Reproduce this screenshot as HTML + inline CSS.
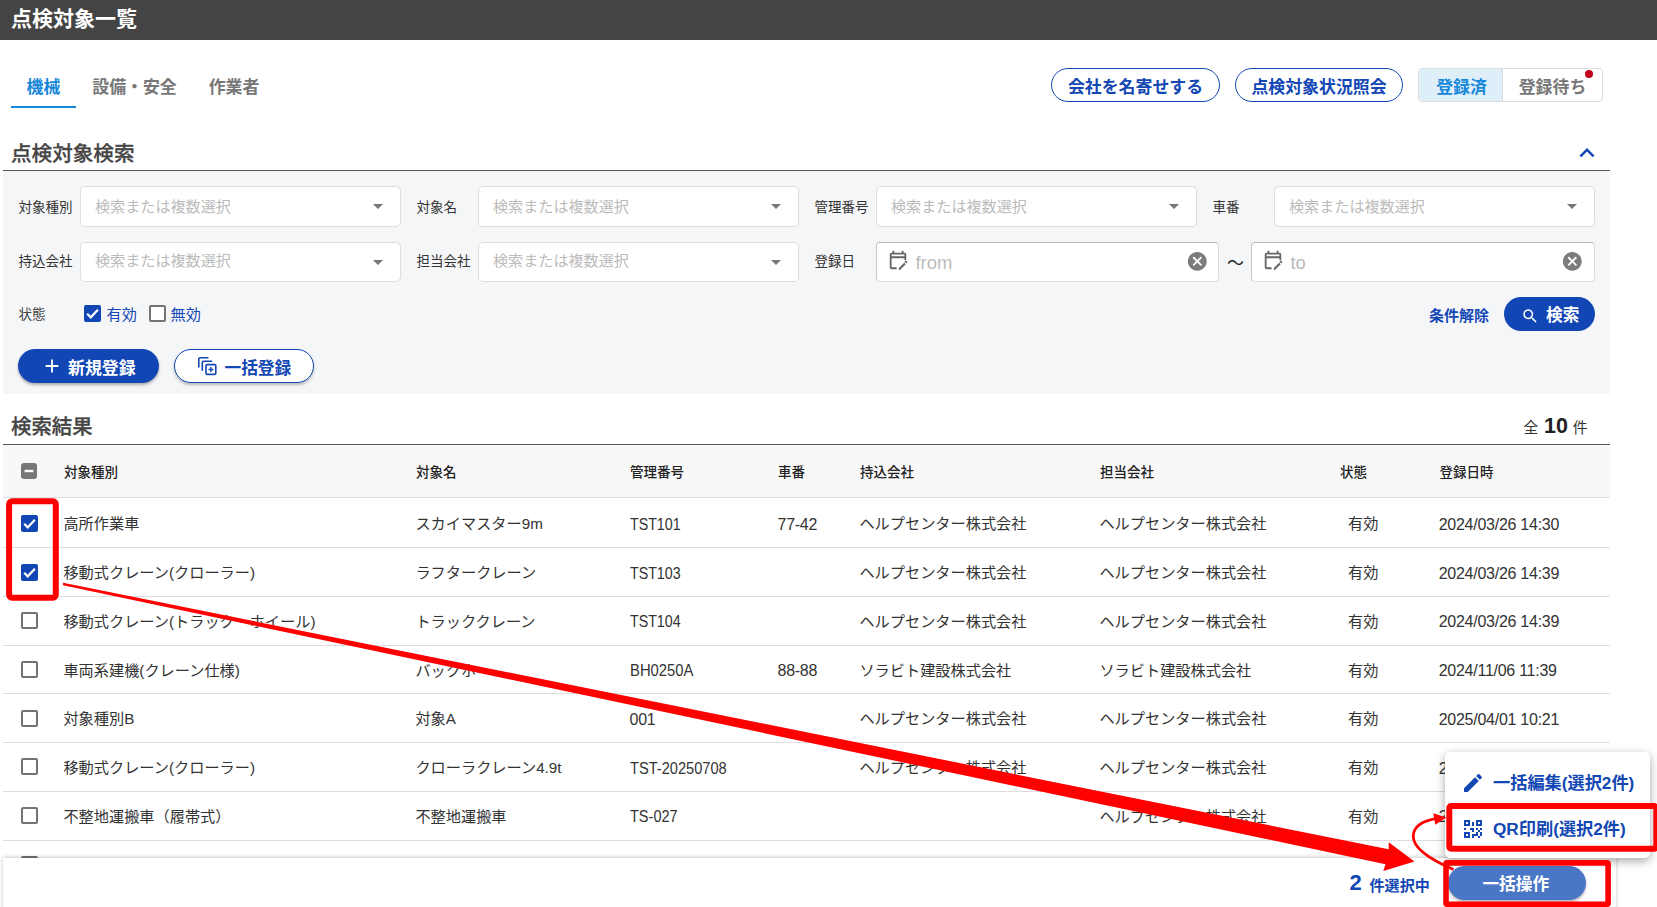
<!DOCTYPE html>
<html lang="ja">
<head>
<meta charset="utf-8">
<title>点検対象一覧</title>
<style>
*{box-sizing:border-box;margin:0;padding:0}
html,body{width:1657px;height:907px;overflow:hidden;background:#fff}
body{position:relative;font-family:"Liberation Sans","Noto Sans CJK JP",sans-serif;color:#333;font-size:15.2px;line-height:1}
.abs{position:absolute}
.hdr{left:0;top:0;width:1657px;height:40px;background:#444}
.hdr h1{position:absolute;left:11px;top:6px;font-size:21px;line-height:25px;font-weight:700;color:#fff;white-space:nowrap}
.tab{position:absolute;top:75px;height:26px;line-height:26px;font-size:16.9px;font-weight:700;color:#777;white-space:nowrap;text-align:center}
.tab.on{color:#1687d9}
.tabline{left:11px;top:106px;width:65px;height:2px;background:#1687d9}
.obtn{position:absolute;top:68px;height:34px;border:1px solid #1247b4;border-radius:17px;background:#fff;color:#1247b4;font-weight:700;font-size:16.9px;line-height:38px;text-align:center;white-space:nowrap}
.tgl{position:absolute;left:1418px;top:68px;width:185px;height:34px;border:1px solid #ddd;border-radius:4px;background:#fff;overflow:hidden}
.tgl span{position:absolute;top:0;height:32px;line-height:37px;font-size:16.9px;font-weight:700;text-align:center;white-space:nowrap}
.tgl .a{left:0;width:84px;background:#dfeffa;color:#1687d9;border-right:1px solid #ddd;text-indent:2px}
.tgl .b{left:84px;width:99px;color:#777}
.dot{left:1585px;top:70px;width:8px;height:8px;border-radius:50%;background:#c4001d}
.sect{position:absolute;left:11px;font-size:20.6px;line-height:26px;font-weight:500;-webkit-text-stroke:.3px #444;color:#444;white-space:nowrap}
.rule{position:absolute;left:3px;width:1607px;height:1px;background:#555}
.panel{left:3px;top:171px;width:1607px;height:223px;background:#f5f6f8}
.lbl{position:absolute;font-size:13.5px;line-height:20px;color:#333;white-space:nowrap}
.sel{position:absolute;width:320.5px;height:40.5px;border:1px solid #ddd;border-radius:5px;background:#fff}
.sel .ph{position:absolute;left:14px;top:0;line-height:39px;font-size:15.1px;color:#bbb;white-space:nowrap}
.sel .arr{position:absolute;right:16.5px;top:17px;width:0;height:0;border-left:5px solid transparent;border-right:5px solid transparent;border-top:5px solid #777}
.date{position:absolute;height:40px;border:1px solid #ddd;border-color:#b8b8b8 #ddd #ddd #c6c6c6;border-radius:4px;background:#fff}
.date .ph{position:absolute;top:0;line-height:40px;font-size:18.4px;color:#bbb;white-space:nowrap}
.date svg{position:absolute}
.cb{position:absolute;width:17px;height:17px;border-radius:2px}
.cb.off{border:2px solid #737373;background:#fff}
.cb.on{background:#1146b4}
.cb.on svg,.cb.ind svg{position:absolute;left:0;top:0}
.cb.ind{width:16px;height:16px;background:#777;border-radius:3px}
.pbtn{position:absolute;background:#1146b4;color:#fff;border-radius:17px;font-weight:700;font-size:16.7px;white-space:nowrap}
.th{position:absolute;top:1.5px;line-height:52px;font-size:13.5px;font-weight:500;color:#222;white-space:nowrap}
.thead{left:3px;top:445px;width:1607px;height:53px;background:#f8f8f8;border-bottom:1px solid #ddd}
.rb{position:absolute;left:3px;width:1607px;height:1px;background:#ddd}
.rt{position:absolute;left:0;width:1657px;height:52px}
.rt span{position:absolute;top:0;line-height:52px;font-size:15.2px;color:#333;white-space:nowrap}
.c1{left:63.400px}.c2{left:415.400px}.c3{left:629.500px}.c4{left:777.500px}.c5{left:859.400px}.c6{left:1099.400px}.c7{left:1348px}.c8{left:1438.700px}
.rt .c8,.rt .dg{font-size:16px;letter-spacing:-.26px;top:.6px}.rt .c3{top:.5px}
.bar{left:3px;top:858px;width:1612.5px;height:60px;background:#fff;box-shadow:0 -1px 4px rgba(0,0,0,.22)}
.menu{left:1445px;top:752px;width:205px;height:106px;background:#fff;border-radius:5px;box-shadow:0 3px 10px rgba(0,0,0,.35)}
.mi{position:absolute;left:48px;font-size:17.2px;line-height:24px;font-weight:700;color:#1247b4;white-space:nowrap}
</style>
</head>
<body>
<div class="abs hdr"><h1>点検対象一覧</h1></div>
<div class="tab on" style="left:11px;width:65px">機械</div>
<div class="tab" style="left:76px;width:117px">設備・安全</div>
<div class="tab" style="left:193px;width:82px">作業者</div>
<div class="abs tabline"></div>
<div class="obtn" style="left:1051px;width:169px">会社を名寄せする</div>
<div class="obtn" style="left:1235px;width:168px">点検対象状況照会</div>
<div class="tgl"><span class="a">登録済</span><span class="b">登録待ち</span></div>
<div class="abs dot"></div>
<div class="sect" style="top:141.400px">点検対象検索</div>
<svg class="abs" style="left:1572.400px;top:137.700px" width="30" height="30" viewBox="0 0 24 24"><path fill="#1247b4" d="M12 8l-6 6 1.410 1.410L12 10.830l4.590 4.580L18 14z"/></svg>
<div class="rule" style="top:170px"></div>
<div class="abs panel"></div>
<div class="lbl" style="left:18.5px;top:198px">対象種別</div>
<div class="sel" style="left:80px;top:186px"><span class="ph">検索または複数選択</span><i class="arr"></i></div>
<div class="lbl" style="left:18.5px;top:252.300px">持込会社</div>
<div class="sel" style="left:80px;top:242px;height:40px"><span class="ph" style="line-height:36px">検索または複数選択</span><i class="arr"></i></div>
<div class="lbl" style="left:416.5px;top:198px">対象名</div>
<div class="sel" style="left:478px;top:186px"><span class="ph">検索または複数選択</span><i class="arr"></i></div>
<div class="lbl" style="left:416.5px;top:252.300px">担当会社</div>
<div class="sel" style="left:478px;top:242px;height:40px"><span class="ph" style="line-height:36px">検索または複数選択</span><i class="arr"></i></div>
<div class="lbl" style="left:814.5px;top:198px">管理番号</div>
<div class="sel" style="left:876px;top:186px"><span class="ph">検索または複数選択</span><i class="arr"></i></div>
<div class="lbl" style="left:814.5px;top:252.300px">登録日</div>
<div class="lbl" style="left:1212.5px;top:198px">車番</div>
<div class="sel" style="left:1274px;top:186px"><span class="ph">検索または複数選択</span><i class="arr"></i></div>
<div class="date" style="left:876px;top:242px;width:342.5px"><svg style="left:9.750px;top:6.200px" width="22" height="22" viewBox="0 0 24 24"><path fill="#666" d="M5 10h14v2h2V6c0-1.100-.9-2-2-2h-1V2h-2v2H8V2H6v2H5c-1.110 0-1.990.9-1.990 2L3 20c0 1.100.89 2 2 2h5.500v-2H5V10zm0-4h14v2H5V6zm16.840 9.080l-.71.71-2.120-2.120.71-.71c.39-.39 1.020-.39 1.410 0l.71.71c.39.39.39 1.020 0 1.410zm-3.540-.7l2.120 2.120-6.300 6.300H13v-2.120l6.300-6.300z"/></svg><span class="ph" style="left:38.500px">from</span><svg style="left:308.9px;top:6.8px" width="22.600" height="22.600" viewBox="0 0 24 24"><path fill="#7c7c7c" d="M12 2C6.470 2 2 6.470 2 12s4.470 10 10 10 10-4.470 10-10S17.530 2 12 2zm5 13.590L15.590 17 12 13.410 8.410 17 7 15.590 10.590 12 7 8.410 8.410 7 12 10.590 15.590 7 17 8.410 13.410 12 17 15.590z"/></svg></div>
<div class="lbl" style="left:1227px;top:253.500px;font-size:17px;color:#222">〜</div>
<div class="date" style="left:1251px;top:242px;width:343.5px"><svg style="left:9.750px;top:6.200px" width="22" height="22" viewBox="0 0 24 24"><path fill="#666" d="M5 10h14v2h2V6c0-1.100-.9-2-2-2h-1V2h-2v2H8V2H6v2H5c-1.110 0-1.990.9-1.990 2L3 20c0 1.100.89 2 2 2h5.500v-2H5V10zm0-4h14v2H5V6zm16.840 9.080l-.71.71-2.120-2.120.71-.71c.39-.39 1.020-.39 1.410 0l.71.71c.39.39.39 1.020 0 1.410zm-3.540-.7l2.120 2.120-6.300 6.300H13v-2.120l6.300-6.300z"/></svg><span class="ph" style="left:38.500px">to</span><svg style="left:308.7px;top:7px" width="22.600" height="22.600" viewBox="0 0 24 24"><path fill="#7c7c7c" d="M12 2C6.470 2 2 6.470 2 12s4.470 10 10 10 10-4.470 10-10S17.530 2 12 2zm5 13.590L15.590 17 12 13.410 8.410 17 7 15.590 10.590 12 7 8.410 8.410 7 12 10.590 15.590 7 17 8.410 13.410 12 17 15.590z"/></svg></div>
<div class="lbl" style="left:18.500px;top:305px;color:#444">状態</div>
<div class="cb on" style="left:83.700px;top:305px"><svg width="17" height="17" viewBox="0 0 17 17"><path d="M3.2 8.800l3.500 3.500 7.200-7.600" fill="none" stroke="#fff" stroke-width="2.200"/></svg></div>
<div class="lbl" style="left:106.500px;top:304.500px;font-size:15.200px;color:#1247b4">有効</div>
<div class="cb off" style="left:149px;top:305px"></div>
<div class="lbl" style="left:170.500px;top:304.500px;font-size:15.200px;color:#1247b4">無効</div>
<div class="lbl" style="left:1429px;top:305.700px;font-size:15px;font-weight:700;color:#1247b4">条件解除</div>
<div class="pbtn" style="left:1504px;top:297px;width:91px;height:34px;line-height:37.600px"><svg class="abs" style="left:16.800px;top:9.500px" width="18.300" height="18.300" viewBox="0 0 24 24"><path fill="#fff" d="M15.500 14h-.79l-.28-.27C15.410 12.590 16 11.110 16 9.500 16 5.910 13.090 3 9.500 3S3 5.910 3 9.500 5.910 16 9.500 16c1.610 0 3.090-.59 4.230-1.570l.27.28v.79l5 4.990L20.490 19l-4.990-5zm-6 0C7.010 14 5 11.990 5 9.500S7.010 5 9.500 5 14 7.010 14 9.500 11.990 14 9.500 14z"/></svg><span class="abs" style="left:42px;top:0">検索</span></div>
<div class="pbtn" style="left:18px;top:349px;width:141px;height:33.500px;line-height:39.900px;font-size:16.900px;box-shadow:0 2px 3px rgba(0,0,0,.3)"><svg class="abs" style="left:23px;top:6px" width="22" height="22" viewBox="0 0 24 24"><path fill="#fff" d="M19 13h-6v6h-2v-6H5v-2h6V5h2v6h6v2z"/></svg><span class="abs" style="left:50px;top:0">新規登録</span></div>
<div class="pbtn" style="left:174px;top:349px;width:140px;height:33.500px;line-height:38.300px;background:#fff;border:1px solid #1247b4;color:#1247b4;box-shadow:0 2px 3px rgba(0,0,0,.25)"><svg class="abs" style="left:23px;top:7.200px" width="19" height="19" viewBox="0 0 19 19" fill="none" stroke="#1247b4" stroke-width="1.600"><path d="M0.800 10.500V2.300Q0.800 0.800 2.300 0.800H10.500"/><path d="M4.300 13.800V5.800Q4.300 4.300 5.800 4.300H14.200"/><rect x="8" y="7.600" width="9.800" height="9.800" rx="1.200"/><path d="M12.900 10v5M10.400 12.500h5" stroke-width="1.500"/></svg><span class="abs" style="left:49.500px;top:0">一括登録</span></div>
<div class="sect" style="top:413.800px;font-size:20.400px">検索結果</div>
<div class="lbl" style="left:1523.500px;top:417px;font-size:14.800px;line-height:22px;color:#333">全</div>
<div class="lbl" style="left:1544px;top:412.500px;font-size:21.500px;line-height:26px;font-weight:700;color:#222">10</div>
<div class="lbl" style="left:1572.700px;top:417px;font-size:14.800px;line-height:22px;color:#333">件</div>
<div class="rule" style="top:444px"></div>
<div class="abs thead"><div class="cb ind" style="left:18px;top:18.300px"><svg width="16" height="16" viewBox="0 0 16 16"><path d="M3.600 8h8.800" stroke="#fff" stroke-width="2.400"/></svg></div>
<span class="th" style="left:61px">対象種別</span>
<span class="th" style="left:413px">対象名</span>
<span class="th" style="left:627px">管理番号</span>
<span class="th" style="left:775px">車番</span>
<span class="th" style="left:857px">持込会社</span>
<span class="th" style="left:1097px">担当会社</span>
<span class="th" style="left:1337px">状態</span>
<span class="th" style="left:1436.5px">登録日時</span>
</div>
<div class="rb" style="top:547px"></div>
<div class="cb on" style="left:21px;top:515.0px"><svg width="17" height="17" viewBox="0 0 17 17"><path d="M3.2 8.800l3.500 3.500 7.200-7.600" fill="none" stroke="#fff" stroke-width="2.200"/></svg></div>
<div class="rt" style="top:498.4px"><span class="c1">高所作業車</span><span class="c2">スカイマスター9m</span><span class="c3" style="font-size:16px;top:.6px;transform-origin:0 50%;transform:scaleX(0.889)">TST101</span><span class="c4 dg">77-42</span><span class="c5">ヘルプセンター株式会社</span><span class="c6">ヘルプセンター株式会社</span><span class="c7">有効</span><span class="c8">2024/03/26 14:30</span></div>
<div class="rb" style="top:596px"></div>
<div class="cb on" style="left:21px;top:563.7px"><svg width="17" height="17" viewBox="0 0 17 17"><path d="M3.2 8.800l3.500 3.500 7.200-7.600" fill="none" stroke="#fff" stroke-width="2.200"/></svg></div>
<div class="rt" style="top:547.1px"><span class="c1">移動式クレーン(クローラー)</span><span class="c2">ラフタークレーン</span><span class="c3" style="font-size:16px;top:.6px;transform-origin:0 50%;transform:scaleX(0.889)">TST103</span><span class="c5">ヘルプセンター株式会社</span><span class="c6">ヘルプセンター株式会社</span><span class="c7">有効</span><span class="c8">2024/03/26 14:39</span></div>
<div class="rb" style="top:645px"></div>
<div class="cb off" style="left:21px;top:612.3px"></div>
<div class="rt" style="top:595.9px"><span class="c1">移動式クレーン(トラック・ホイール)</span><span class="c2">トラッククレーン</span><span class="c3" style="font-size:16px;top:.6px;transform-origin:0 50%;transform:scaleX(0.889)">TST104</span><span class="c5">ヘルプセンター株式会社</span><span class="c6">ヘルプセンター株式会社</span><span class="c7">有効</span><span class="c8">2024/03/26 14:39</span></div>
<div class="rb" style="top:693px"></div>
<div class="cb off" style="left:21px;top:661.0px"></div>
<div class="rt" style="top:644.6px"><span class="c1">車両系建機(クレーン仕様)</span><span class="c2">バックホー</span><span class="c3" style="font-size:16px;top:.6px;transform-origin:0 50%;transform:scaleX(0.926)">BH0250A</span><span class="c4 dg">88-88</span><span class="c5">ソラビト建設株式会社</span><span class="c6">ソラビト建設株式会社</span><span class="c7">有効</span><span class="c8">2024/11/06 11:39</span></div>
<div class="rb" style="top:742px"></div>
<div class="cb off" style="left:21px;top:709.7px"></div>
<div class="rt" style="top:693.3px"><span class="c1">対象種別B</span><span class="c2">対象A</span><span class="c3 dg">001</span><span class="c5">ヘルプセンター株式会社</span><span class="c6">ヘルプセンター株式会社</span><span class="c7">有効</span><span class="c8">2025/04/01 10:21</span></div>
<div class="rb" style="top:791px"></div>
<div class="cb off" style="left:21px;top:758.4px"></div>
<div class="rt" style="top:742.0px"><span class="c1">移動式クレーン(クローラー)</span><span class="c2">クローラクレーン4.9t</span><span class="c3" style="font-size:16px;top:.6px;transform-origin:0 50%;transform:scaleX(0.913)">TST-20250708</span><span class="c5">ヘルプセンター株式会社</span><span class="c6">ヘルプセンター株式会社</span><span class="c7">有効</span><span class="c8">2025/07/08 13:05</span></div>
<div class="rb" style="top:840px"></div>
<div class="cb off" style="left:21px;top:807.0px"></div>
<div class="rt" style="top:790.8px"><span class="c1">不整地運搬車（履帯式）</span><span class="c2">不整地運搬車</span><span class="c3" style="font-size:16px;top:.6px;transform-origin:0 50%;transform:scaleX(0.907)">TS-027</span><span class="c6">ヘルプセンター株式会社</span><span class="c7">有効</span><span class="c8">2025/07/08 13:20</span></div>
<div class="cb off" style="left:21px;top:855.7px"></div>
<div class="abs bar"></div>
<div class="lbl" style="left:1349.500px;top:870px;font-size:22px;line-height:26px;font-weight:700;color:#1247b4">2</div>
<div class="lbl" style="left:1369.500px;top:875px;font-size:15.100px;line-height:22px;font-weight:700;color:#1247b4">件選択中</div>
<div class="pbtn" style="left:1448px;top:866px;width:138px;height:34px;line-height:38.400px;text-indent:-2.400px;background:#4a76c6;text-align:center;box-shadow:0 2px 3px rgba(0,0,0,.3)">一括操作</div>
<div class="abs menu"><svg class="abs" style="left:15.600px;top:19.400px" width="24" height="24" viewBox="0 0 24 24"><path fill="#1247b4" d="M3 17.250V21h3.750L17.810 9.940l-3.750-3.750L3 17.250zM20.710 7.040c.39-.39.39-1.020 0-1.410l-2.340-2.340c-.39-.39-1.020-.39-1.410 0l-1.830 1.830 3.750 3.750 1.830-1.830z"/></svg><span class="mi" style="top:18.600px">一括編集(選択2件)</span><svg class="abs" style="left:15.800px;top:64.800px" width="24" height="24" viewBox="0 0 24 24"><path fill="#1247b4" d="M3,11H5V13H3V11M11,5H13V9H11V5M9,11H13V15H11V13H9V11M15,11H17V13H19V11H21V13H19V15H21V19H19V21H17V19H13V21H11V17H15V15H17V13H15V11M19,19V15H17V19H19M15,3H21V9H15V3M17,5V7H19V5H17M3,3H9V9H3V3M5,5V7H7V5H5M3,15H9V21H3V15M5,17V19H7V17H5Z"/></svg><span class="mi" style="top:64.700px">QR印刷(選択2件)</span></div>
<!-- annotations -->
<svg class="abs" style="left:0;top:0;pointer-events:none" width="1657" height="907" viewBox="0 0 1657 907"><g fill="none" stroke="#fe0000" stroke-width="6"><rect x="9.100" y="501.200" width="46.700" height="96.500" rx="3"/><rect x="1449.300" y="806.100" width="207" height="42.600" rx="2"/><rect x="1446" y="862.900" width="162.100" height="41.300" rx="1" stroke-width="5.600"/></g><polygon fill="#fe0000" points="63,582.800 1388.700,849.300 1388.700,842.200 1414.500,861.600 1383.300,870.900 1385.500,864.200 63,585.200"/><path d="M1453.500 869.500C1436 862 1413 850 1413.200 836C1413.500 826 1424 820.500 1437 818.300" fill="none" stroke="#fe0000" stroke-width="2.800"/><polygon fill="#fe0000" points="1446.300,817.600 1433.300,813.200 1435.300,824.700"/></svg>
</body>
</html>
